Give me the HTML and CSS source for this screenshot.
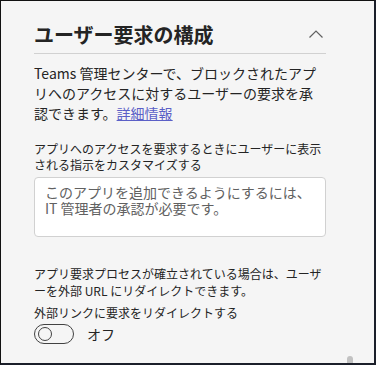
FILE: index.html
```html
<!DOCTYPE html>
<html lang="ja">
<head>
<meta charset="utf-8">
<link rel="stylesheet" href="styles.css">
</head>
<body>
<div class="frame">
  <section class="panel">
    <header class="panel-head">
      <h2 class="title">ユーザー要求の構成</h2>
      <svg class="chevron" width="16" height="10" viewBox="0 0 16 10"><path d="M1.5 8.5 L8 2 L14.5 8.5" fill="none" stroke="#616161" stroke-width="1.2"/></svg>
    </header>
    <div class="divider"></div>
    <p class="intro">Teams 管理センターで、ブロックされたアプリへのアクセスに対するユーザーの要求を承認できます。<a class="link" href="#">詳細情報</a></p>
    <label class="field-label" for="msg">アプリへのアクセスを要求するときにユーザーに表示される指示をカスタマイズする</label>
    <textarea id="msg" class="input" placeholder="このアプリを追加できるようにするには、IT 管理者の承認が必要です。"></textarea>
    <p class="note">アプリ要求プロセスが確立されている場合は、ユーザーを外部 URL にリダイレクトできます。</p>
    <div class="toggle-label">外部リンクに要求をリダイレクトする</div>
    <div class="toggle-row">
      <span class="toggle"><span class="knob"></span></span>
      <span class="toggle-text">オフ</span>
    </div>
  </section>
  <div class="scroll-thumb"></div>
</div>
</body>
</html>
```
FILE: styles.css
```css
html, body {
  margin: 0;
  padding: 0;
}
body {
  font-family: "Segoe UI", "Noto Sans CJK JP", sans-serif;
  color: #242424;
  background: #f5f5f5;
}
.frame {
  position: relative;
  width: 376px;
  height: 365px;
  box-sizing: border-box;
  border-style: solid;
  border-color: #111;
  border-width: 1px 2px 2px 1px;
  border-right-color: #1b1f2a;
  border-bottom-color: #1b1f2a;
  background: #f5f5f5;
  overflow: hidden;
}
.panel {
  width: 292px;
  padding: 20px 0 0 33px;
  display: flex;
  flex-direction: column;
}
.panel-head {
  display: flex;
  align-items: center;
  justify-content: space-between;
}
.title {
  margin: 0;
  font-size: 20px;
  line-height: 28px;
  font-weight: 700;
  color: #242424;
}
.chevron {
  margin-right: 2px;
  margin-top: -2px;
}
.divider {
  height: 1px;
  background: #d1d1d1;
  margin-top: 4px;
}
.intro {
  margin: 9px 0 0;
  font-size: 14px;
  line-height: 20px;
}
.link {
  color: #5b5fc7;
  text-decoration: underline;
}
.field-label {
  display: block;
  margin-top: 18px;
  font-size: 12px;
  line-height: 16px;
}
.input {
  display: block;
  margin-top: 4px;
  width: 292px;
  height: 60px;
  box-sizing: border-box;
  padding: 6px 10px;
  border: 1px solid #d1d1d1;
  border-radius: 4px;
  background: #fff;
  font-family: "Segoe UI", "Noto Sans CJK JP", sans-serif;
  font-size: 14px;
  line-height: 16px;
  color: #242424;
  resize: none;
  outline: none;
}
.input::placeholder {
  color: #616161;
  opacity: 1;
}
.note {
  margin: 28px 0 0;
  font-size: 12px;
  line-height: 17px;
}
.toggle-label {
  margin-top: 5px;
  font-size: 12px;
  line-height: 17px;
}
.toggle-row {
  display: flex;
  align-items: center;
  margin-top: 3px;
}
.toggle {
  width: 40px;
  height: 20px;
  box-sizing: border-box;
  border: 1px solid #424242;
  border-radius: 10px;
  display: flex;
  align-items: center;
  padding-left: 3px;
}
.knob {
  width: 14px;
  height: 14px;
  box-sizing: border-box;
  border: 1.5px solid #424242;
  border-radius: 50%;
}
.toggle-text {
  margin-left: 13px;
  font-size: 14px;
  line-height: 20px;
}
.scroll-thumb {
  position: absolute;
  left: 346px;
  top: 355px;
  width: 6px;
  height: 14px;
  border-radius: 3px;
  background: #c2c2c2;
}
```
